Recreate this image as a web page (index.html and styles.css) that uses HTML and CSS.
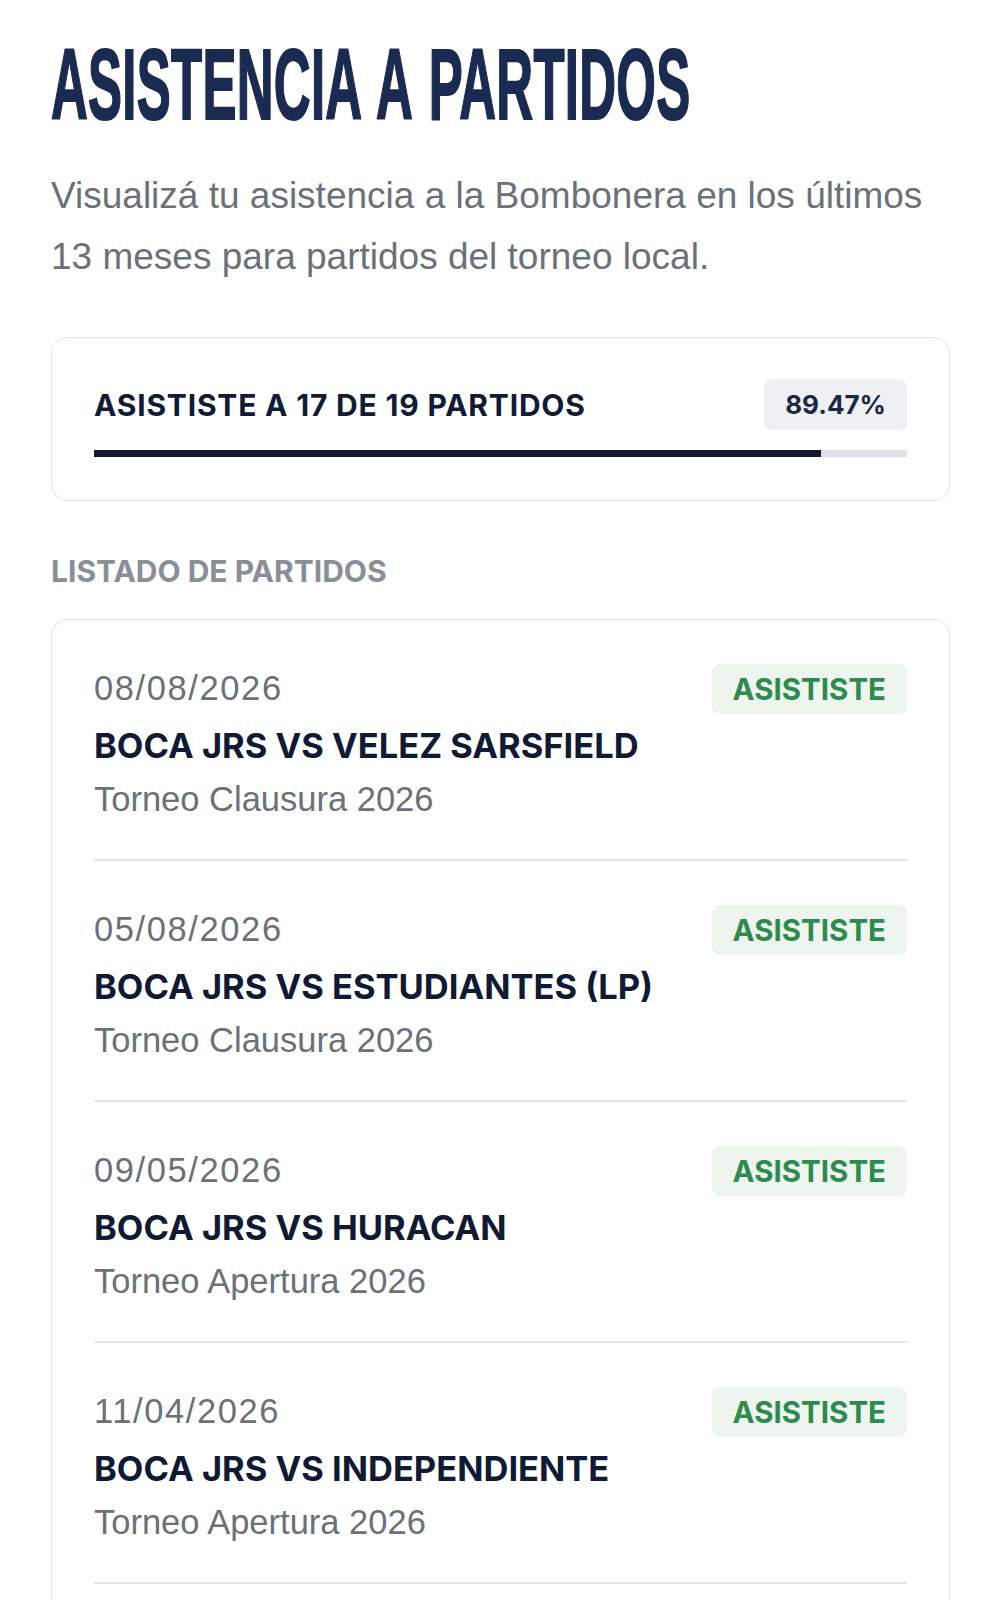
FILE: index.html
```html
<!DOCTYPE html>
<html lang="es">
<head>
    <meta charset="UTF-8">
    <meta name="viewport" content="width=device-width, initial-scale=1.0">
    <title>Asistencia a partidos</title>
    <link rel="stylesheet" href="styles.css">
</head>
<body>
    <div class="container">
        <h1 class="title">ASISTENCIA A PARTIDOS</h1>
        <p class="intro">Visualizá tu asistencia a la Bombonera en los últimos 13 meses para partidos del torneo local.</p>

        <div class="card summary">
            <div class="summary-head">
                <span class="summary-text">ASISTISTE A 17 DE 19 PARTIDOS</span>
                <span class="percent">89.47%</span>
            </div>
            <div class="progress">
                <div class="progress-fill" style="width: 89.47%"></div>
            </div>
        </div>

        <h2 class="section-title">LISTADO DE PARTIDOS</h2>

        <div class="card match-list">
            <div class="match">
                <div class="match-top">
                    <span class="match-date">08/08/2026</span>
                    <span class="status">ASISTISTE</span>
                </div>
                <div class="match-name">BOCA JRS VS VELEZ SARSFIELD</div>
                <div class="match-tournament">Torneo Clausura 2026</div>
            </div>
            <div class="match">
                <div class="match-top">
                    <span class="match-date">05/08/2026</span>
                    <span class="status">ASISTISTE</span>
                </div>
                <div class="match-name">BOCA JRS VS ESTUDIANTES (LP)</div>
                <div class="match-tournament">Torneo Clausura 2026</div>
            </div>
            <div class="match">
                <div class="match-top">
                    <span class="match-date">09/05/2026</span>
                    <span class="status">ASISTISTE</span>
                </div>
                <div class="match-name">BOCA JRS VS HURACAN</div>
                <div class="match-tournament">Torneo Apertura 2026</div>
            </div>
            <div class="match">
                <div class="match-top">
                    <span class="match-date">11/04/2026</span>
                    <span class="status">ASISTISTE</span>
                </div>
                <div class="match-name">BOCA JRS VS INDEPENDIENTE</div>
                <div class="match-tournament">Torneo Apertura 2026</div>
            </div>
        </div>
    </div>
</body>
</html>
```

FILE: styles.css
```css
body {
    margin: 0;
    background-color: #fff;
    font-family: "Liberation Sans", Arial, sans-serif;
    color: #6c7078;
    overflow-x: hidden;
}
.container {
    width: 899px;
    margin-left: 51px;
    padding-top: 34px;
}
.title {
    margin: 0;
    font-family: "Liberation Sans", Arial, sans-serif;
    font-size: 100px;
    line-height: 1;
    font-weight: 700;
    color: #1a2a50;
    white-space: nowrap;
    transform: scaleX(0.51);
    transform-origin: left center;
    -webkit-text-stroke: 2px #1a2a50;
    letter-spacing: 0.5px;
    word-spacing: 6px;
}
.intro {
    margin: 31px 0 0;
    font-size: 37px;
    line-height: 61px;
    color: #6c7078;
}
.card {
    border: 1px solid #e1e3e8;
    border-radius: 16px;
    background-color: #fff;
}
.summary {
    margin-top: 50px;
    padding: 41px 42px 43px;
}
.summary-head {
    display: flex;
    justify-content: space-between;
    align-items: center;
}
.summary-text {
    font-family: Inter, sans-serif;
    font-size: 30px;
    font-weight: 700;
    letter-spacing: 0.8px;
    color: #121b35;
}
.percent {
    font-family: Inter, sans-serif;
    font-size: 26px;
    font-weight: 700;
    line-height: 51px;
    padding: 0 21px;
    background-color: #eef0f3;
    border-radius: 8px;
    color: #1a2745;
}
.progress {
    margin-top: 20px;
    height: 7px;
    background-color: #dde2ea;
}
.progress-fill {
    height: 100%;
    background-color: #111a32;
}
.section-title {
    margin: 52px 0 0;
    font-family: Inter, sans-serif;
    font-size: 30px;
    line-height: 36px;
    font-weight: 700;
    color: #8a8e96;
}
.match-list {
    margin-top: 30px;
    padding: 0 42px 40px;
    border-bottom: none;
    border-radius: 16px 16px 0 0;
}
.match {
    padding: 40px 0 35px;
    border-bottom: 2px solid #e3e5e9;
}
.match-top {
    display: flex;
    justify-content: space-between;
    align-items: center;
    height: 57px;
}
.match-date {
    font-size: 34.5px;
    letter-spacing: 1.6px;
    color: #6c7078;
}
.status {
    font-family: Inter, sans-serif;
    font-size: 29.5px;
    font-weight: 700;
    line-height: 50px;
    padding: 0 21px;
    background-color: #edf5ee;
    border-radius: 8px;
    color: #2e8a4e;
}
.match-name {
    font-family: Inter, sans-serif;
    font-size: 34.5px;
    line-height: 57px;
    font-weight: 700;
    color: #111a33;
}
.match-tournament {
    font-size: 34.5px;
    line-height: 50px;
    color: #6c7078;
}
```
